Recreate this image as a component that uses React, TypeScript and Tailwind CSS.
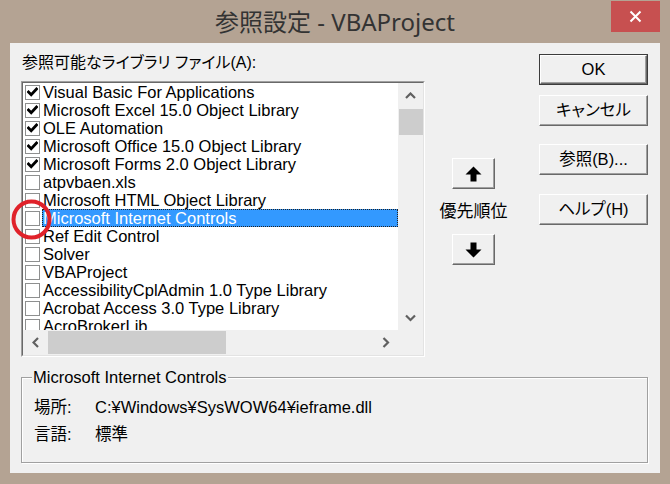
import React from "react";

type Item = { t: string; c?: boolean; sel?: boolean };

const items: Item[] = [
  { t: "Visual Basic For Applications", c: true },
  { t: "Microsoft Excel 15.0 Object Library", c: true },
  { t: "OLE Automation", c: true },
  { t: "Microsoft Office 15.0 Object Library", c: true },
  { t: "Microsoft Forms 2.0 Object Library", c: true },
  { t: "atpvbaen.xls" },
  { t: "Microsoft HTML Object Library" },
  { t: "Microsoft Internet Controls", sel: true },
  { t: "Ref Edit Control" },
  { t: "Solver" },
  { t: "VBAProject" },
  { t: "AccessibilityCplAdmin 1.0 Type Library" },
  { t: "Acrobat Access 3.0 Type Library" },
  { t: "AcroBrokerLib" },
];

function Check() {
  return (
    <svg width="11" height="10" viewBox="0 0 11 10">
      <polyline points="1.5,5 4.2,7.8 9.5,2" fill="none" stroke="#000" strokeWidth="2.8" strokeLinecap="square" />
    </svg>
  );
}

function Chevron({ dir }: { dir: "up" | "down" | "left" | "right" }) {
  const pts =
    dir === "up"
      ? "1,6 5.5,1.5 10,6"
      : dir === "down"
      ? "1,1.5 5.5,6 10,1.5"
      : dir === "left"
      ? "6,1 1.5,5.5 6,10"
      : "1.5,1 6,5.5 1.5,10";
  const w = dir === "up" || dir === "down" ? 11 : 8;
  const h = dir === "up" || dir === "down" ? 8 : 11;
  return (
    <svg width={w} height={h} viewBox={`0 0 ${w} ${h}`}>
      <polyline points={pts} fill="none" stroke="#606060" strokeWidth="2.2" />
    </svg>
  );
}

function Btn({ children, def }: { children: React.ReactNode; def?: boolean }) {
  const inner = (
    <div className="h-full w-full flex items-center justify-center border border-t-white border-l-white border-r-[#696969] border-b-[#696969] shadow-[inset_-1px_-1px_0_#a0a0a0] bg-[#f0f0f0]">
      {children}
    </div>
  );
  if (def) {
    return <div className="h-[31px] w-full border border-[#3c3c3c]">{inner}</div>;
  }
  return <div className="h-[31px] w-full">{inner}</div>;
}

function ArrowIcon({ up }: { up?: boolean }) {
  return (
    <svg width="17" height="16" viewBox="0 0 17 16" style={{ transform: up ? undefined : "rotate(180deg)" }}>
      <polygon points="8.5,0.5 16.5,8.5 11.5,8.5 11.5,15.5 5.5,15.5 5.5,8.5 0.5,8.5" fill="#000" />
    </svg>
  );
}

export default function App() {
  return (
    <div className="relative w-[670px] h-[484px] bg-[#b4a393] flex flex-col font-['Liberation_Sans','Noto_Sans_CJK_JP',sans-serif] [font-feature-settings:'palt'] text-black overflow-hidden">
      {/* Title bar */}
      <div className="h-[43px] shrink-0 flex items-center justify-center">
        <div className="text-[24px] leading-[30px] text-[#333333] font-['Noto_Sans','Noto_Sans_CJK_JP',sans-serif] mt-[1px]">
          参照設定 - VBAProject
        </div>
      </div>
      <div className="absolute left-[611px] top-[1px] w-[49px] h-[31px] bg-[#c75050] flex items-center justify-center">
        <svg width="13" height="13" viewBox="0 0 13 13">
          <path d="M1.5 1.5 L11.5 11.5 M11.5 1.5 L1.5 11.5" stroke="#fff" strokeWidth="2" />
        </svg>
      </div>

      {/* Client */}
      <div className="mx-[10px] h-[430px] shrink-0 bg-[#f0f0f0] flex flex-col text-[16.5px]">
        <div className="flex pt-[11px] pl-[11px]">
          {/* left column */}
          <div className="w-[404px] flex flex-col">
            <div className="h-[18px] leading-[18px] pl-[1px] whitespace-nowrap text-[16px]">参照可能なライブラリ ファイル(A):</div>
            <div className="mt-[9px] w-[404px] h-[276px] border border-t-[#a0a0a0] border-l-[#a0a0a0] border-r-white border-b-white">
              <div className="w-full h-full border border-t-[#696969] border-l-[#696969] border-r-[#e3e3e3] border-b-[#e3e3e3] grid grid-cols-[375px_25px] grid-rows-[247px_25px]">
                {/* rows */}
                <div className="bg-white overflow-hidden">
                  {items.map((it) => (
                    <div key={it.t} className="flex items-center h-[18px] pl-[2px]">
                      <div className="w-[15px] h-[15px] shrink-0 border border-[#8e8f8f] bg-white flex items-center justify-center">
                        {it.c && <Check />}
                      </div>
                      <div
                        className={
                          it.sel
                            ? "ml-[2px] flex-1 h-[18px] leading-[16px] border border-dotted border-[#222] bg-[#3399ff] text-white whitespace-nowrap"
                            : "ml-[2px] flex-1 h-[18px] leading-[16px] border border-transparent whitespace-nowrap"
                        }
                      >
                        {it.t}
                      </div>
                    </div>
                  ))}
                </div>
                {/* vertical scrollbar */}
                <div className="bg-[#f0f0f0] flex flex-col">
                  <div className="h-[25px] flex items-center justify-center">
                    <Chevron dir="up" />
                  </div>
                  <div className="ml-[1px] mt-[1px] h-[26px] bg-[#cdcdcd]" />
                  <div className="flex-1" />
                  <div className="h-[24px] flex items-center justify-center">
                    <Chevron dir="down" />
                  </div>
                </div>
                {/* horizontal scrollbar */}
                <div className="bg-[#f0f0f0] flex">
                  <div className="w-[25px] flex items-center justify-center">
                    <Chevron dir="left" />
                  </div>
                  <div className="mt-[1px] w-[178px] h-[23px] bg-[#cdcdcd]" />
                  <div className="flex-1" />
                  <div className="w-[25px] flex items-center justify-center">
                    <Chevron dir="right" />
                  </div>
                </div>
                <div className="bg-[#f0f0f0]" />
              </div>
            </div>
          </div>

          {/* middle column */}
          <div className="ml-[27px] w-[43px] pt-[104px] flex flex-col items-center">
            <div className="w-[43px]">
              <Btn>
                <ArrowIcon up />
              </Btn>
            </div>
            <div className="h-[45px] flex items-center justify-center whitespace-nowrap text-[17px]">優先順位</div>
            <div className="w-[43px]">
              <Btn>
                <ArrowIcon />
              </Btn>
            </div>
          </div>

          {/* right column */}
          <div className="ml-[44px] w-[109px] flex flex-col">
            <Btn def>OK</Btn>
            <div className="mt-[10px]">
              <Btn>キャンセル</Btn>
            </div>
            <div className="mt-[18px]">
              <Btn>参照(B)...</Btn>
            </div>
            <div className="mt-[19px]">
              <Btn>ヘルプ(H)</Btn>
            </div>
          </div>
        </div>

        {/* group box */}
        <div className="relative mt-[20px] ml-[11px] mr-[12px] h-[86px] shrink-0 border border-[#a0a0a0] shadow-[1px_1px_0_#ffffff,inset_1px_1px_0_#ffffff]">
          <div className="absolute -top-[10px] left-[10px] px-[1px] leading-[18px] bg-[#f0f0f0] whitespace-nowrap">
            Microsoft Internet Controls
          </div>
          <div className="pl-[12px] pt-[16px]">
            <div className="flex h-[27px] items-center">
              <div className="w-[61px]">場所:</div>
              <div>C:¥Windows¥SysWOW64¥ieframe.dll</div>
            </div>
            <div className="flex h-[27px] items-center">
              <div className="w-[61px]">言語:</div>
              <div>標準</div>
            </div>
          </div>
        </div>
      </div>

      {/* red annotation circle */}
      <svg className="absolute left-[11px] top-[199px]" width="41" height="41" viewBox="0 0 41 41">
        <circle cx="20.5" cy="20.5" r="18" fill="none" stroke="#e0222a" strokeWidth="4" />
      </svg>
    </div>
  );
}
